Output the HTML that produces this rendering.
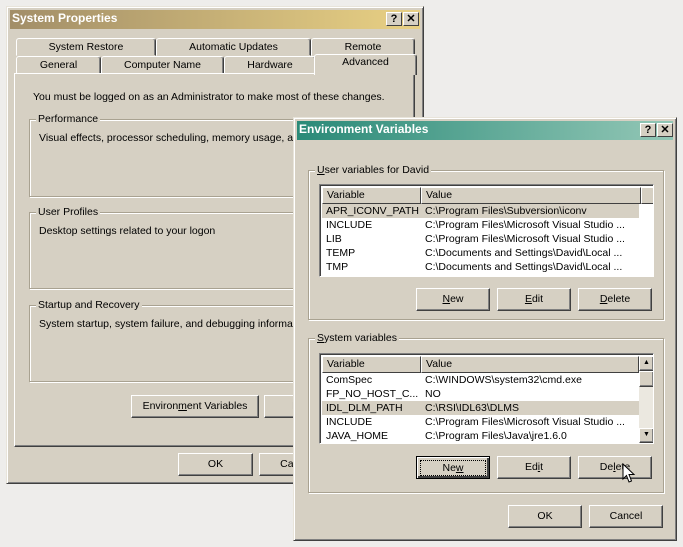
<!DOCTYPE html>
<html><head><style>
*{margin:0;padding:0;box-sizing:border-box}
body{width:683px;height:547px;background:#eeedeb;position:relative;overflow:hidden;font-family:Tahoma,"Liberation Sans",sans-serif;font-size:10.5px;color:#000}
.a{position:absolute}
.win{background:#d6d0c3;border:1px solid;border-color:#e8e4da #404040 #404040 #e8e4da;box-shadow:inset 1px 1px 0 #fff,inset -1px -1px 0 #808080}
.title{color:#fff;font-weight:bold;font-size:12px;line-height:17px;padding-left:2px}
.tb{width:16px;height:14px;background:#d6d0c3;border:1px solid;border-color:#fff #404040 #404040 #fff;font-weight:bold;font-size:11px;text-align:center;line-height:12px;color:#000}
.btn{background:#d6d0c3;border:1px solid;border-color:#fff #404040 #404040 #fff;box-shadow:inset -1px -1px 0 #808080;text-align:center;line-height:20px;font-size:10.5px}
.grp{border:1px solid #a9a291;box-shadow:1px 1px 0 #fff,inset 1px 1px 0 #fff}
.gl{background:#d6d0c3;padding:0 2px;position:absolute;top:-7px;left:6px;line-height:12px}
.tab{background:#d6d0c3;border:1px solid;border-color:#fff #404040 transparent #fff;border-radius:3px 3px 0 0;text-align:center;line-height:16px;box-shadow:inset -1px 0 0 #808080}
.list{background:#fff;border:1px solid;border-color:#808080 #fff #fff #808080;box-shadow:inset 1px 1px 0 #404040;overflow:hidden}
.hd{position:absolute;height:17px;background:#d6d0c3;border:1px solid;border-color:#fff #404040 #404040 #fff;line-height:15px;padding-left:4px}
.row{position:absolute;height:14px;line-height:14px;white-space:nowrap}
.row span{position:absolute}
u{text-decoration:underline}
</style></head><body>

<!-- System Properties -->
<div class="a win" style="left:6px;top:6px;width:418px;height:478px">
 <div class="a title" style="left:3px;top:3px;width:410px;height:19px;background:linear-gradient(90deg,#a28e68,#e9d184)">System Properties</div>
 <div class="a tb" style="left:379px;top:5px">?</div>
 <div class="a tb" style="left:396px;top:5px">✕</div>
 <div class="a tab" style="left:9px;top:31px;width:140px;height:18px">System Restore</div>
 <div class="a tab" style="left:149px;top:31px;width:155px;height:18px">Automatic Updates</div>
 <div class="a tab" style="left:304px;top:31px;width:104px;height:18px">Remote</div>
 <div class="a tab" style="left:9px;top:49px;width:85px;height:18px">General</div>
 <div class="a tab" style="left:94px;top:49px;width:123px;height:18px">Computer Name</div>
 <div class="a tab" style="left:217px;top:49px;width:92px;height:18px">Hardware</div>
 <div class="a" style="left:7px;top:66px;width:401px;height:374px;border:1px solid;border-color:#fff #404040 #404040 #fff;box-shadow:inset -1px -1px 0 #808080;background:#d6d0c3"></div>
 <div class="a tab" style="left:307px;top:47px;width:103px;height:21px;line-height:15px;border-bottom:none;z-index:2">Advanced</div>
 <div class="a" style="left:26px;top:84px">You must be logged on as an Administrator to make most of these changes.</div>
 <div class="a grp" style="left:22px;top:112px;width:380px;height:78px"><div class="gl">Performance</div><div class="a" style="left:9px;top:12px;white-space:nowrap">Visual effects, processor scheduling, memory usage, and virtual memory</div></div>
 <div class="a grp" style="left:22px;top:205px;width:380px;height:77px"><div class="gl">User Profiles</div><div class="a" style="left:9px;top:12px">Desktop settings related to your logon</div></div>
 <div class="a grp" style="left:22px;top:298px;width:380px;height:77px"><div class="gl">Startup and Recovery</div><div class="a" style="left:9px;top:12px;white-space:nowrap">System startup, system failure, and debugging information</div></div>
 <div class="a btn" style="left:124px;top:388px;width:128px;height:23px">Environ<u>m</u>ent Variables</div>
 <div class="a btn" style="left:257px;top:388px;width:128px;height:23px">Error Reporting</div>
 <div class="a btn" style="left:171px;top:446px;width:75px;height:23px">OK</div>
 <div class="a btn" style="left:252px;top:446px;width:75px;height:23px">Cancel</div>
</div>

<!-- Environment Variables -->
<div class="a win" style="left:293px;top:117px;width:384px;height:424px">
 <div class="a title" style="left:3px;top:3px;width:376px;height:19px;background:linear-gradient(90deg,#2a8a78,#93c7b6)">Environment Variables</div>
 <div class="a tb" style="left:346px;top:5px">?</div>
 <div class="a tb" style="left:363px;top:5px">✕</div>

 <div class="a grp" style="left:14px;top:52px;width:356px;height:150px"><div class="gl"><u>U</u>ser variables for David</div></div>
 <div class="a list" style="left:25px;top:66px;width:335px;height:93px">
  <div class="hd" style="left:2px;top:2px;width:99px">Variable</div>
  <div class="hd" style="left:101px;top:2px;width:220px">Value</div>
  <div class="hd" style="left:321px;top:2px;width:14px"></div>
  <div class="row" style="left:2px;top:19px;width:317px;background:#d6d0c3"><span style="left:4px">APR_ICONV_PATH</span><span style="left:103px">C:\Program Files\Subversion\iconv</span></div>
  <div class="row" style="left:2px;top:33px"><span style="left:4px">INCLUDE</span><span style="left:103px">C:\Program Files\Microsoft Visual Studio ...</span></div>
  <div class="row" style="left:2px;top:47px"><span style="left:4px">LIB</span><span style="left:103px">C:\Program Files\Microsoft Visual Studio ...</span></div>
  <div class="row" style="left:2px;top:61px"><span style="left:4px">TEMP</span><span style="left:103px">C:\Documents and Settings\David\Local ...</span></div>
  <div class="row" style="left:2px;top:75px"><span style="left:4px">TMP</span><span style="left:103px">C:\Documents and Settings\David\Local ...</span></div>
 </div>
 <div class="a btn" style="left:122px;top:170px;width:74px;height:23px"><u>N</u>ew</div>
 <div class="a btn" style="left:203px;top:170px;width:74px;height:23px"><u>E</u>dit</div>
 <div class="a btn" style="left:284px;top:170px;width:74px;height:23px"><u>D</u>elete</div>

 <div class="a grp" style="left:14px;top:220px;width:356px;height:155px"><div class="gl"><u>S</u>ystem variables</div></div>
 <div class="a list" style="left:25px;top:235px;width:335px;height:91px">
  <div class="hd" style="left:2px;top:2px;width:99px">Variable</div>
  <div class="hd" style="left:101px;top:2px;width:218px">Value</div>
  <div class="row" style="left:2px;top:19px"><span style="left:4px">ComSpec</span><span style="left:103px">C:\WINDOWS\system32\cmd.exe</span></div>
  <div class="row" style="left:2px;top:33px"><span style="left:4px">FP_NO_HOST_C...</span><span style="left:103px">NO</span></div>
  <div class="row" style="left:2px;top:47px;width:317px;background:#d6d0c3"><span style="left:4px">IDL_DLM_PATH</span><span style="left:103px">C:\RSI\IDL63\DLMS</span></div>
  <div class="row" style="left:2px;top:61px"><span style="left:4px">INCLUDE</span><span style="left:103px">C:\Program Files\Microsoft Visual Studio ...</span></div>
  <div class="row" style="left:2px;top:75px"><span style="left:4px">JAVA_HOME</span><span style="left:103px">C:\Program Files\Java\jre1.6.0</span></div>
  <div class="a" style="left:319px;top:2px;width:15px;height:87px;background:#ebe8e0"></div>
  <div class="a btn" style="left:319px;top:2px;width:15px;height:15px;line-height:12px;font-size:7px">▲</div>
  <div class="a btn" style="left:319px;top:17px;width:15px;height:16px"></div>
  <div class="a btn" style="left:319px;top:74px;width:15px;height:15px;line-height:12px;font-size:7px">▼</div>
 </div>
 <div class="a btn" style="left:122px;top:338px;width:74px;height:23px;border:1px solid #000;box-shadow:inset 1px 1px 0 #fff,inset -2px -2px 0 #404040"><div style="margin:3px;border:1px dotted #000;line-height:14px">Ne<u>w</u></div></div>
 <div class="a btn" style="left:203px;top:338px;width:74px;height:23px">Ed<u>i</u>t</div>
 <div class="a btn" style="left:284px;top:338px;width:74px;height:23px">De<u>l</u>ete</div>
 <svg class="a" style="left:328px;top:345px" width="14" height="22" viewBox="0 0 14 22"><path d="M1 1 L1 16 L4.5 12.5 L7 19 L9.5 18 L7 11.5 L12 11.5 Z" fill="#fff" stroke="#000" stroke-width="1"/></svg>

 <div class="a btn" style="left:214px;top:387px;width:74px;height:23px">OK</div>
 <div class="a btn" style="left:295px;top:387px;width:74px;height:23px">Cancel</div>
</div>
</body></html>
